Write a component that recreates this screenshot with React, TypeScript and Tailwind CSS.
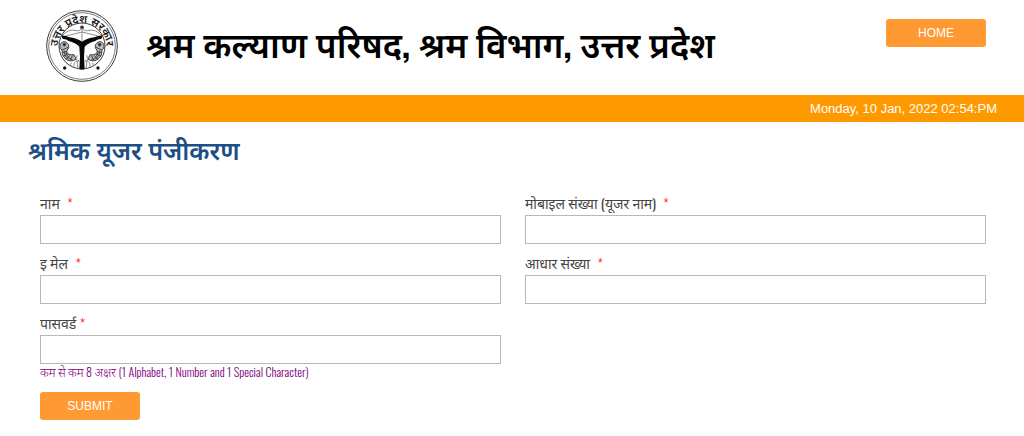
import type { InputHTMLAttributes, ReactNode } from 'react';

function Emblem() {
  return (
    <svg viewBox="0 0 216 216" className="h-[72px] w-[72px] shrink-0" role="img" aria-label="उत्तर प्रदेश सरकार">
      <defs>
        <path id="emblem-arc" d="M36 124 A73 73 0 1 1 180 124" />
      </defs>
      <g fill="none" stroke="#3a3a3a">
        <circle cx="108" cy="108" r="106" strokeWidth="3" />
        <circle cx="108" cy="108" r="100" strokeWidth="2" />
        <circle cx="108" cy="108" r="69" strokeWidth="3" />
      </g>
      <text fontSize="33" fontWeight="600" fill="#1a1a1a" textAnchor="middle" className="font-['Noto_Sans_Devanagari','Noto_Sans',sans-serif]">
        <textPath href="#emblem-arc" startOffset="50%">उत्तर प्रदेश सरकार</textPath>
      </text>
      <circle cx="56" cy="174" r="5" fill="#111" />
      <circle cx="156" cy="174" r="5" fill="#111" />
      <g fill="none" stroke="#777" strokeWidth="2.5">
        <path d="M46 80 Q66 54 92 62 Q104 64 108 52 Q112 64 124 62 Q150 54 170 80" />
        <path d="M52 80 L108 66 L164 80" />
        <path d="M108 50 V104" />
        <circle cx="108" cy="52" r="5" fill="#222" />
      </g>
      <path
        d="M46 77 Q58 76 70 82 Q92 84 108 95 Q124 84 146 82 Q158 76 170 77 L166 87 Q156 86 148 93 Q128 98 116 110 Q112 140 116 176 Q108 181 100 176 Q104 140 100 110 Q88 98 68 93 Q60 86 50 87 Z"
        fill="#080808"
      />
      <g fill="none" stroke="#444" strokeWidth="3">
        <g id="emblem-fish">
          <path d="M42 106 Q46 92 60 96 Q72 104 68 114 Q62 120 62 126 Q66 136 84 134 L90 148 Q72 158 58 146 Q46 136 48 120 Q40 116 42 106 Z" fill="#bbb" />
          <circle cx="55" cy="104" r="4" fill="#222" />
          <path d="M48 120 L66 112 M54 122 Q54 138 68 148 M60 126 Q62 142 80 150 M50 128 L62 124 M52 138 L66 132 M60 148 L72 136 M72 152 L80 136" />
        </g>
        <use href="#emblem-fish" transform="translate(216 0) scale(-1 1)" />
      </g>
      <g fill="none" stroke="#888" strokeWidth="3">
        <path d="M94 136 Q88 146 94 154 Q82 154 84 170 M98 150 Q90 160 96 174 M76 158 Q72 164 76 170" />
        <path d="M122 136 Q128 146 122 154 Q134 154 132 170 M118 150 Q126 160 120 174 M140 158 Q144 164 140 170" />
      </g>
    </svg>
  );
}

type FieldProps = InputHTMLAttributes<HTMLInputElement> & { id: string; label: string; tight?: boolean; children?: ReactNode };

function Field({ id, label, tight, children, ...input }: FieldProps) {
  return (
    <div>
      <label htmlFor={id} className="flex text-sm leading-6 text-[#444]">
        <span>{label}</span>
        <span className={`${tight ? 'ml-1' : 'ml-2'} font-['Liberation_Sans',Arial,sans-serif] text-xs leading-6 text-[#ff2020]`}>*</span>
      </label>
      <input
        id={id}
        required
        className="block h-[29px] w-full border border-[#b8b8b8] bg-white px-2 text-sm outline-none focus:border-[#f93]"
        {...input}
      />
      {children}
    </div>
  );
}

const button =
  "flex h-7 w-[100px] items-center justify-center rounded-[3px] bg-[#ff9933] font-['Liberation_Sans',Arial,sans-serif] text-xs text-white";

export default function App() {
  return (
    <div className="bg-white font-['Oswald','Noto_Sans_Devanagari','Noto_Sans',sans-serif]">
      <header className="flex h-[95px] items-start pr-[38px] pl-[46px]">
        <div className="flex flex-1 items-start gap-7 pt-2.5">
          <Emblem />
          <h1 className="text-[35px] leading-[64px] font-semibold whitespace-nowrap text-black">
            श्रम कल्याण परिषद, श्रम विभाग, उत्तर प्रदेश
          </h1>
        </div>
        <nav className="pt-[19px]">
          <a href="#home" className={button}>HOME</a>
        </nav>
      </header>
      <div className="flex h-[27px] items-center justify-end bg-[#ff9900] pr-[27px] font-['Liberation_Sans',Arial,sans-serif] text-[13px] text-white">
        <time dateTime="2022-01-10T14:54">Monday, 10 Jan, 2022 02:54:PM</time>
      </div>
      <main className="pr-[38px] pb-4 pl-7">
        <h2 className="pt-3 font-['Noto_Sans_Devanagari','Noto_Sans',sans-serif] text-[25px] leading-10 font-semibold text-[#1c4f86]">
          श्रमिक यूजर पंजीकरण
        </h2>
        <form className="pt-[17px] pl-3" onSubmit={(e) => e.preventDefault()}>
          <div className="grid grid-cols-2 gap-x-6 gap-y-[7px]">
            <Field id="name" label="नाम" type="text" />
            <Field id="mobile" label="मोबाइल संख्या (यूजर नाम)" type="tel" />
            <Field id="email" label="इ मेल" type="email" />
            <Field id="aadhaar" label="आधार संख्या" type="text" />
            <Field id="password" label="पासवर्ड" type="password" tight aria-describedby="password-hint">
              <p id="password-hint" className="text-xs leading-4 font-light whitespace-nowrap text-[#800080]">
                कम से कम 8 अक्षर (1 Alphabet, 1 Number and 1 Special Character)
              </p>
            </Field>
          </div>
          <button type="submit" className={`${button} mt-3`}>SUBMIT</button>
        </form>
      </main>
    </div>
  );
}
